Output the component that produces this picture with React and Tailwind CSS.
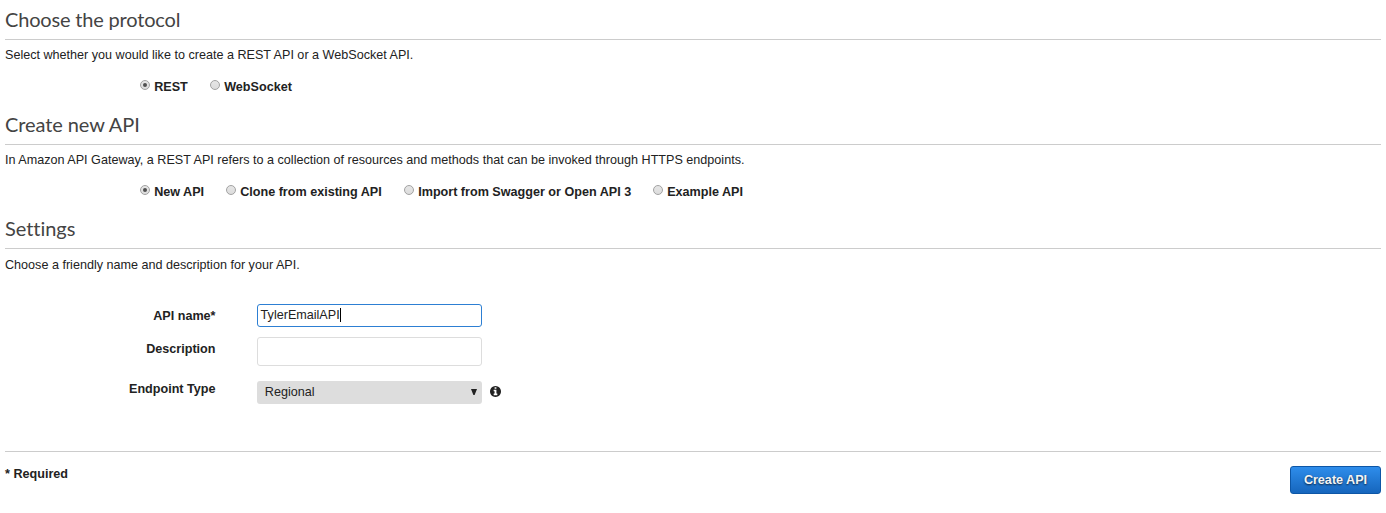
function InfoIcon({ className }) {
  return (
    <svg className={className} viewBox="0 128 1536 1536" fill="currentColor">
      <path d="M1024 1376v-160q0-14-9-23t-23-9h-96v-512q0-14-9-23t-23-9h-320q-14 0-23 9t-9 23v160q0 14 9 23t23 9h96v320h-96q-14 0-23 9t-9 23v160q0 14 9 23t23 9h448q14 0 23-9t9-23zm-128-896v-160q0-14-9-23t-23-9h-192q-14 0-23 9t-9 23v160q0 14 9 23t23 9h192q14 0 23-9t9-23zm640 416q0 209-103 385.5t-279.5 279.5-385.5 103-385.5-103-279.5-279.5-103-385.5 103-385.5 279.5-279.5 385.5-103 385.5 103 279.5 279.5 103 385.5z" />
    </svg>
  );
}

function SectionTitle({ children, className }) {
  return (
    <h2
      className={`border-b border-[#cccccc] font-['Lato',sans-serif] text-[20px] leading-[24px] text-[#444444] [font-variant-ligatures:none] ${className}`}
    >
      {children}
    </h2>
  );
}

function Radio({ label, checked, className }) {
  return (
    <label className={`flex font-bold leading-[18px] ${className}`}>
      <span className="mt-[2px] mr-[4.2px] flex size-[10px] shrink-0 items-center justify-center rounded-full border border-[#a2a2a2] bg-linear-to-b from-[#e6e6e6] to-[#dcdcdc]">
        {checked && <span className="size-1 rounded-full bg-[#505050]" />}
      </span>
      <span className="whitespace-nowrap">{label}</span>
    </label>
  );
}

function FieldLabel({ children, className }) {
  return (
    <label className={`w-[210.5px] shrink-0 text-right font-bold leading-[18px] ${className}`}>{children}</label>
  );
}

export default function App() {
  return (
    <main className="h-[513px] overflow-hidden bg-white px-[5px] font-['Liberation_Sans',Arial,sans-serif] text-[12.6px] leading-[18px] text-[#222222]">
      <section className="h-[105px]">
        <SectionTitle className="h-10 pt-[7px] tracking-[-0.18px]">Choose the protocol</SectionTitle>
        <p className="pt-[6px]">Select whether you would like to create a REST API or a WebSocket API.</p>
        <div className="flex pt-[14px] pl-[135px]">
          <Radio label="REST" checked className="w-[70px]" />
          <Radio label="WebSocket" />
        </div>
      </section>

      <section className="h-[105px]">
        <SectionTitle className="h-10 pt-[7px] tracking-[-0.08px]">Create new API</SectionTitle>
        <p className="pt-[6px]">
          In Amazon API Gateway, a REST API refers to a collection of resources and methods that can be invoked through
          HTTPS endpoints.
        </p>
        <div className="flex pt-[14px] pl-[135px]">
          <Radio label="New API" checked className="w-[86px]" />
          <Radio label="Clone from existing API" className="w-[178px]" />
          <Radio label="Import from Swagger or Open API 3" className="w-[249px]" />
          <Radio label="Example API" />
        </div>
      </section>

      <section className="h-[241px]">
        <SectionTitle className="h-[39px] pt-[6px] tracking-[-0.04px]">Settings</SectionTitle>
        <p className="pt-[7px]">Choose a friendly name and description for your API.</p>
        <div className="mt-[30px] flex h-[33px]">
          <FieldLabel className="pt-[3px]">API name*</FieldLabel>
          <div className="ml-[41.5px] flex h-[23px] w-[225px] items-center rounded-[3px] border border-[#2d7fd3] bg-white pb-px pl-[2.6px]">
            <span>TylerEmailAPI</span>
            <span className="h-[14px] w-px bg-black" />
          </div>
        </div>
        <div className="flex h-[44px]">
          <FieldLabel className="pt-[3px]">Description</FieldLabel>
          <div className="ml-[41.5px] h-[29px] w-[225px] rounded-[3px] border border-[#dddddd] bg-white" />
        </div>
        <div className="flex">
          <FieldLabel className="-mt-px">Endpoint Type</FieldLabel>
          <div className="ml-[41.5px] flex h-[23px] w-[225px] items-center justify-between rounded-[3px] bg-[#dddddd] pr-[5px] pb-px pl-[7.8px]">
            <span>Regional</span>
            <svg className="h-[6px] w-[6px] fill-[#222222]" viewBox="0 0 6 6">
              <path d="M0 0h6L3.6 6H2.4z" />
            </svg>
          </div>
          <InfoIcon className="mt-[5px] ml-2 size-[11px] text-[#222222]" />
        </div>
      </section>

      <footer className="flex justify-between border-t border-[#cccccc] pt-[14px]">
        <span className="-mt-px font-bold leading-[18px]">* Required</span>
        <button className="h-7 w-[91px] rounded-[3px] border border-[#0d56a6] bg-linear-to-b from-[#2e8deb] to-[#1666bd] pb-px font-bold text-[#f4f4f4] [text-shadow:0_1px_2px_rgba(0,0,0,0.7)]">
          Create API
        </button>
      </footer>
    </main>
  );
}
